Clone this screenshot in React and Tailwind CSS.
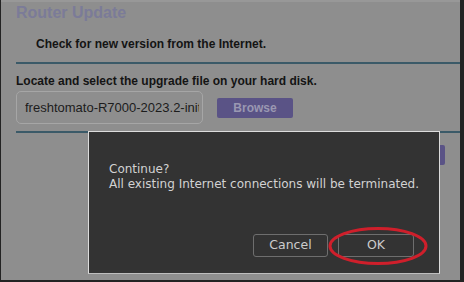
export default function App() {
  const page = { fontFamily: '"Liberation Sans", Arial, sans-serif' }
  const dlg = { fontFamily: '"DejaVu Sans", "Liberation Sans", sans-serif' }

  return (
    <div className="relative w-[464px] h-[282px] bg-[#232323] overflow-hidden">
      {/* dimmed page underneath */}
      <div className="ml-[1px] w-[459px] h-[280px] bg-[#8e8e8e] overflow-hidden" style={page}>
        <div className="h-[2px] bg-[#989898]" />
        <div className="pl-[15px]">
          <h1 className="mt-[1px] h-[20px] leading-[20px] text-[16px] font-bold text-[#7b7b98]">Router Update</h1>
          <p className="mt-[13px] pl-[20px] h-[16px] leading-[16px] text-[12px] font-bold text-[#141414]">
            Check for new version from the Internet.
          </p>
          <div className="mt-[10px] h-[2px] bg-[#3b5a68]" />
          <p className="mt-[9px] h-[16px] leading-[16px] text-[12px] font-bold text-[#141414]">
            Locate and select the upgrade file on your hard disk.
          </p>
          <div className="mt-[2px] flex items-center">
            <div className="w-[187px] h-[33px] rounded-[5px] border border-[#a6a6a6] pl-[8px] flex items-center text-[13px] text-[#1c1c1c]">
              <span className="block w-[174px] overflow-hidden whitespace-nowrap">freshtomato-R7000-2023.2-initial</span>
            </div>
            <button className="ml-[14px] w-[76px] h-[20px] rounded-[2px] bg-[#5a5386] text-[12px] font-bold text-[#9a98b2]">
              Browse
            </button>
          </div>
          <div className="mt-[7px] h-[2px] bg-[#3b5a68]" />
          <div className="flex justify-end pr-[15px]">
            <button className="mt-[12px] w-[60px] h-[20px] rounded-[2px] bg-[#5a5386] text-[12px] font-bold text-[#9a98b2]">
              Upgrade
            </button>
          </div>
        </div>
      </div>

      {/* confirm dialog */}
      <div
        className="absolute left-[88px] top-[131px] w-[352px] h-[143px] bg-[#333333] border border-[#dcdcdc] border-b-[#bdbdbd] flex flex-col"
        style={dlg}
      >
        <div className="pt-[30px] pl-[20px] text-[12px] leading-[15px] text-[#d2d2d2]">
          <p>Continue?</p>
          <p>All existing Internet connections will be terminated.</p>
        </div>
        <div className="mt-auto mb-[16px] mr-[25px] flex justify-end gap-[10px]">
          <button className="w-[75px] h-[23px] rounded-[3px] border border-[#6e6e6e] text-[12.5px] text-[#cccccc]">
            Cancel
          </button>
          <button className="relative w-[76px] h-[23px] rounded-[3px] border border-[#6e6e6e] text-[12.5px] text-[#cccccc]">
            OK
            <svg className="absolute left-[-10px] top-[-8px] overflow-visible" width="100" height="38" viewBox="0 0 100 38">
              <ellipse cx="49" cy="19" rx="48" ry="17.5" fill="none" stroke="#cf1f2b" strokeWidth="3" />
            </svg>
          </button>
        </div>
      </div>
    </div>
  )
}
